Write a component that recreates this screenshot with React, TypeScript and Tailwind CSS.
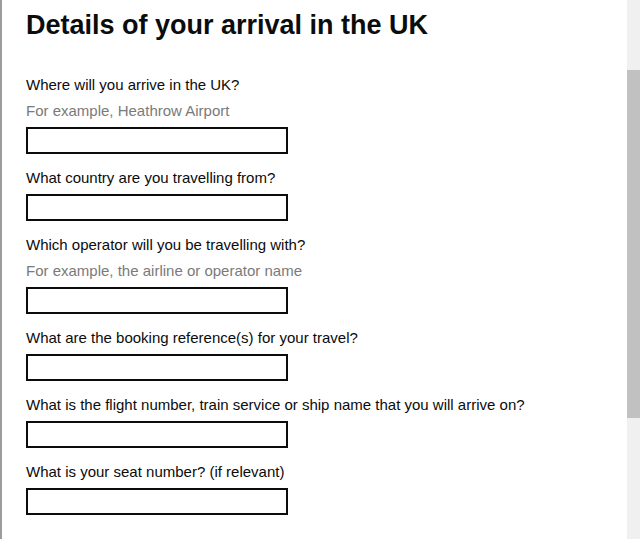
const fields: { label: string; hint?: string }[] = [
  { label: "Where will you arrive in the UK?", hint: "For example, Heathrow Airport" },
  { label: "What country are you travelling from?" },
  { label: "Which operator will you be travelling with?", hint: "For example, the airline or operator name" },
  { label: "What are the booking reference(s) for your travel?" },
  { label: "What is the flight number, train service or ship name that you will arrive on?" },
  { label: "What is your seat number? (if relevant)" },
];

export default function App() {
  return (
    <div className="flex h-[539px] w-[640px] overflow-hidden bg-white text-[#0b0c0c] font-['Liberation_Sans',Arial,sans-serif]">
      <div className="w-[2px] shrink-0 bg-[#9c9c9c]" />
      <main className="flex-1 pl-[24px]">
        <h1 className="mt-[9px] text-[27px] font-bold leading-[32px]">
          Details of your arrival in the UK
        </h1>
        <form className="mt-[34px]">
          {fields.map((f) => (
            <div key={f.label} className="mb-[14px]">
              <label className="block text-[15px] leading-[20px]">{f.label}</label>
              {f.hint && (
                <div className="mt-[6px] text-[15px] leading-[20px] text-[#7a7a7a]">{f.hint}</div>
              )}
              <input
                type="text"
                className="mt-[6px] block h-[27px] w-[262px] border-2 border-[#0b0c0c] bg-white"
              />
            </div>
          ))}
        </form>
      </main>
      <div className="flex w-[13px] shrink-0 flex-col bg-[#f0f0f0]">
        <div className="mt-[70px] h-[348px] bg-[#c1c1c1]" />
      </div>
    </div>
  );
}
